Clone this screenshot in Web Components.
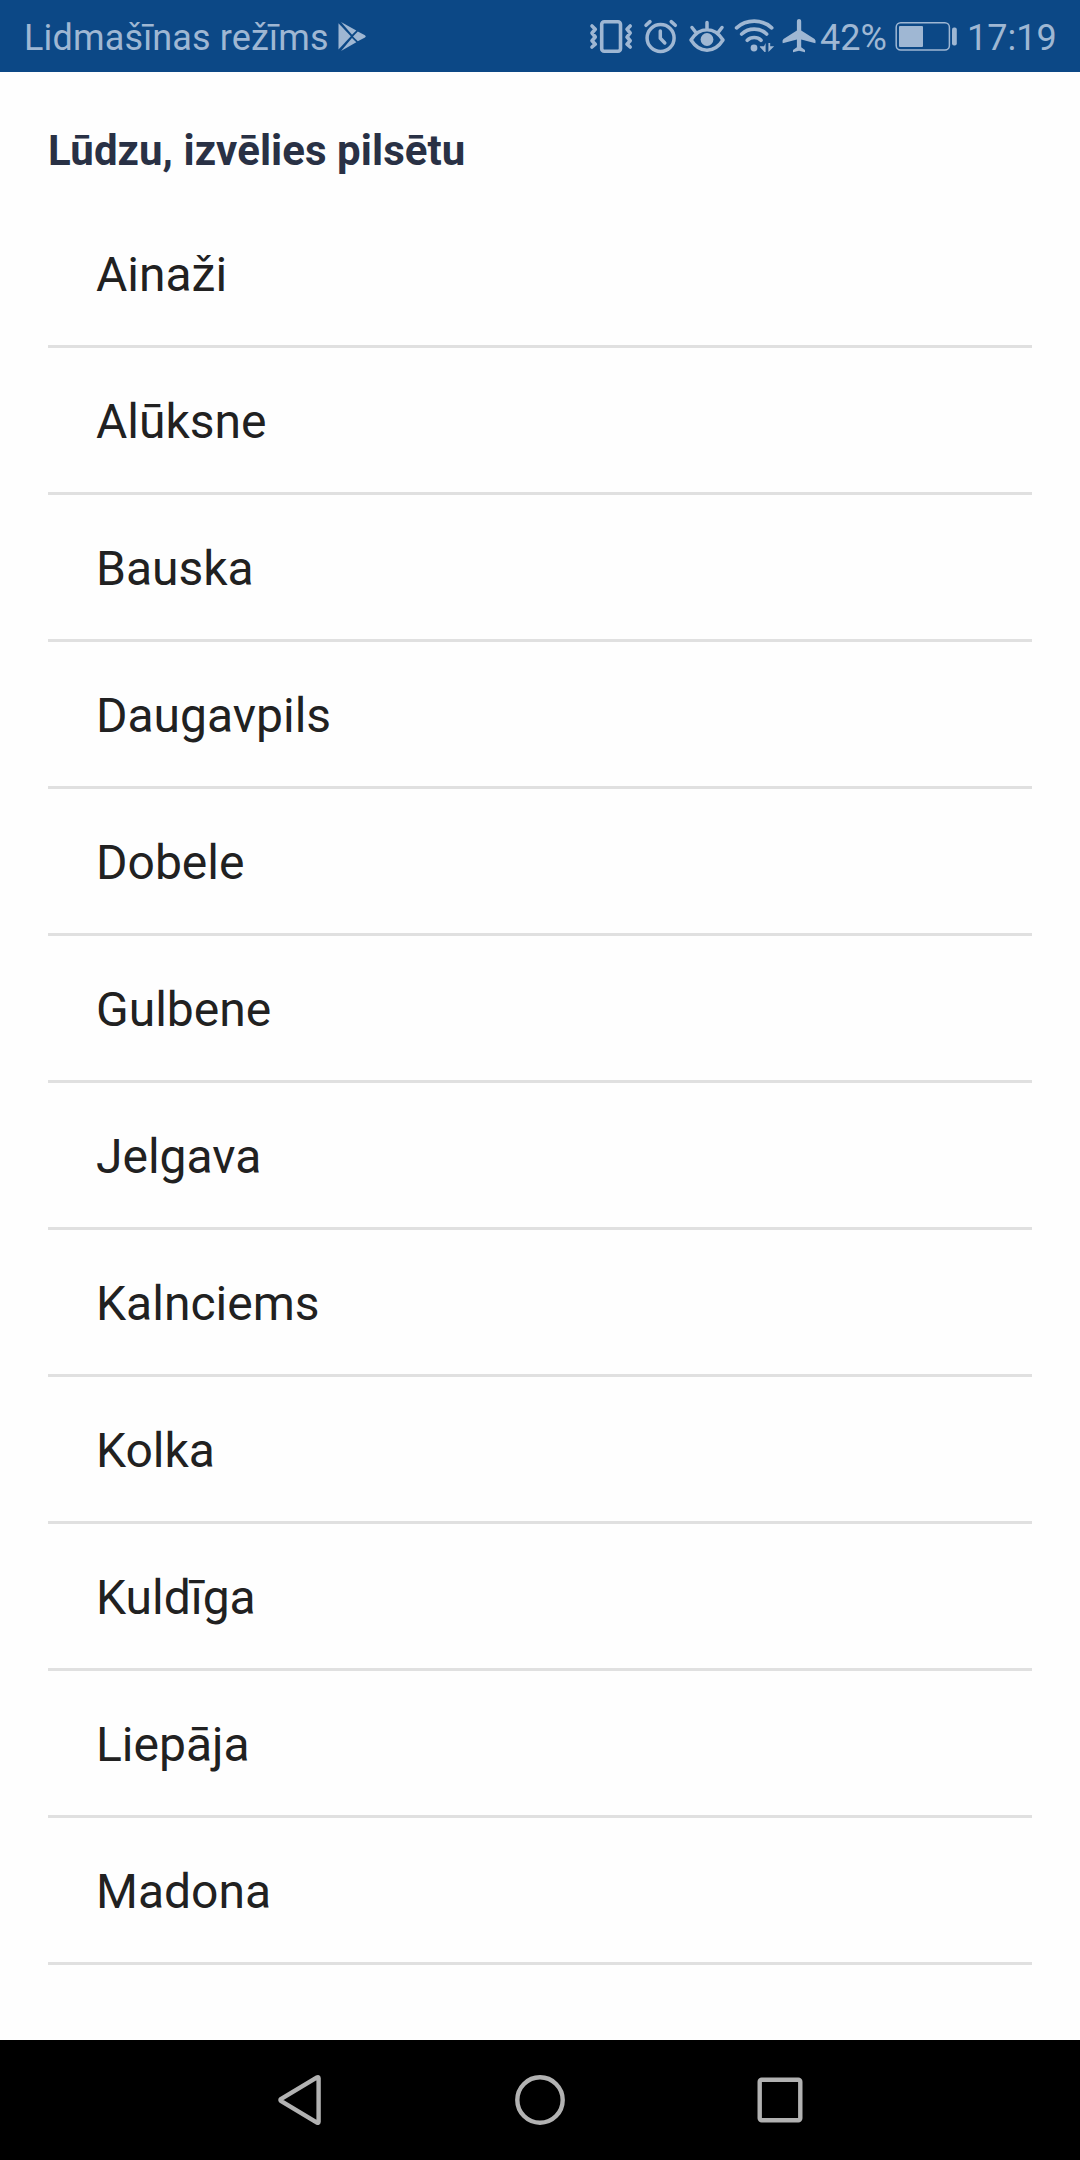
<!DOCTYPE html>
<html lang="lv">
<head>
<meta charset="utf-8">
<title>Pilsētas izvēle</title>
<style>
html, body { margin: 0; padding: 0; }
body { font-family: Roboto, "Noto Sans", sans-serif; background: #fefefe; }
</style>
</head>
<body>
<city-app></city-app>
<script>
class BaseElement extends HTMLElement {
  constructor() {
    super();
    this.attachShadow({ mode: "open" }).innerHTML = this.render();
  }
}

class StatusBar extends BaseElement {
  render() {
    return `
<style>
:host { display: flex; height: 72px; flex: none; background: #0c4886; color: #9fb7d3; font-size: 36px; line-height: 77px; white-space: nowrap; overflow: hidden; padding: 0 24px; box-sizing: border-box; justify-content: space-between; }
.side { display: flex; }
svg { display: block; height: 72px; flex: none; fill: none; stroke: #9fb7d3; stroke-linecap: round; stroke-linejoin: round; }
.solid { fill: #9fb7d3; stroke: none; }
.carrier { width: 310px; letter-spacing: .16px; }
.percent { width: 69px; padding-left: 1px; }
.clock { width: 89px; padding-left: 1px; }
</style>
<div class="side">
  <span class="carrier">Lidmašīnas režīms</span>
  <svg width="36" viewBox="334 0 36 72"><g class="solid">
    <path d="M338.5 23.2 350.8 36.3 338.5 49.5Z"/>
    <path d="M341 22 356.3 30.6 352 34.8Z"/>
    <path d="M341 51 356.3 42.2 352 38Z"/>
    <path d="M357.8 31.6 365 35.3Q366.6 36.4 365 37.6L357.8 41.2 353 36.4Z"/>
  </g></svg>
</div>
<div class="side">
  <svg width="52" viewBox="586 0 52 72" stroke-width="3.6">
    <rect x="601.7" y="21.8" width="18.8" height="29.4" rx="2.5"/>
    <path d="M592 26 595.3 29.2 592 33 595.3 37 592 40.7 595.3 44.2 592 47M630.2 26 627 29.2 630.2 33 627 37 630.2 40.7 627 44.2 630.2 47"/>
  </svg>
  <svg width="46" viewBox="638 0 46 72" stroke-width="3.5">
    <circle cx="660.6" cy="38" r="13.5"/>
    <path d="M660.3 31V38.3L664.8 43M646 25.3 650 21.6M675.3 25.3 671.2 21.6"/>
  </svg>
  <svg width="46" viewBox="684 0 46 72" stroke-width="3.5">
    <path d="M691 40Q697.5 29.7 707 29.7T723 40Q716.5 50.2 707 50.2T691 40ZM707 29V22.5M695.5 32 692 27.5M718.5 32 722 27.5"/>
    <circle class="solid" cx="707" cy="39.5" r="6.4"/>
  </svg>
  <svg width="49" viewBox="730 0 49 72" stroke-width="3.7">
    <path d="M736.6 27.8Q744 21.2 754.2 21.2T771.7 27.8M741.7 34Q747 29.2 754.2 29.2T766.6 34M747.3 40.2Q750 37.5 754.2 37.5T761 40.2"/>
    <circle class="solid" cx="754" cy="48" r="3.4"/>
    <path class="solid" d="M765.6 43V52H764.5L759.9 47V46.3H764ZM768.4 43V52L774.2 46.2H770.2V43Z"/>
  </svg>
  <svg width="40" viewBox="779 0 40 72">
    <path class="solid" d="M796.9 21.5C796.9 18.3 801.2 18.3 801.2 21.5V30.5L814.6 39Q816.2 40.3 815.4 43.3L801.2 39.6V47.3L805 50V52.2L799 50.8 793 52.2V50L796.9 47.3V39.6L782.7 43.3Q781.9 40.3 783.5 39L796.9 30.5Z"/>
  </svg>
  <span class="percent">42%</span>
  <svg width="77" viewBox="889 0 77 72">
    <rect x="896.2" y="22.7" width="53.2" height="27.3" rx="4.5" stroke-width="1.5"/>
    <rect class="solid" x="899" y="26" width="24" height="21" rx="1"/>
    <rect class="solid" x="952" y="27.5" width="4.8" height="18" rx="2"/>
  </svg>
  <span class="clock">17:19</span>
</div>`;
  }
}

class CityItem extends BaseElement {
  render() {
    return `
<style>
:host { display: block; height: 147px; box-sizing: border-box; padding: 3px 48px 0; border-bottom: 3px solid #e0e0e0; font-size: 48px; line-height: 141px; color: #212121; }
</style><slot></slot>`;
  }
}

class CityList extends BaseElement {
  render() {
    return `
<style>
:host { display: flex; flex-direction: column; }
h1 { margin: 0; height: 129px; font-size: 42px; line-height: 158px; font-weight: 700; letter-spacing: .06px; color: #293145; }
</style>
<h1>Lūdzu, izvēlies pilsētu</h1>
<slot></slot>`;
  }
}

class NavBar extends BaseElement {
  render() {
    return `
<style>
:host { display: flex; height: 120px; flex: none; background: #000; justify-content: center; }
svg { display: block; width: 240px; height: 120px; fill: none; stroke: #b2b2b2; stroke-width: 4.4; stroke-linejoin: round; }
</style>
<svg viewBox="180 2040 240 120"><path d="M318.6 2078.2Q318.6 2076.5 317 2077.4L281.2 2098.8Q279.6 2100 281.2 2101.2L317 2122.6Q318.6 2123.5 318.6 2121.8Z"/></svg>
<svg viewBox="420 2040 240 120"><circle cx="540" cy="2100" r="22.7"/></svg>
<svg viewBox="660 2040 240 120"><rect x="759.7" y="2079.7" width="40.6" height="40.6" rx="2"/></svg>`;
  }
}

class CityApp extends BaseElement {
  render() {
    const cities = ["Ainaži", "Alūksne", "Bauska", "Daugavpils", "Dobele", "Gulbene", "Jelgava", "Kalnciems", "Kolka", "Kuldīga", "Liepāja", "Madona"];
    return `
<style>
:host { display: flex; flex-direction: column; width: 1080px; height: 2160px; overflow: hidden; background: #fefefe; }
city-list { flex: 1; padding: 0 48px; }
</style>
<status-bar></status-bar>
<city-list>${cities.map(c => `<city-item>${c}</city-item>`).join("")}</city-list>
<nav-bar></nav-bar>`;
  }
}

customElements.define("status-bar", StatusBar);
customElements.define("city-item", CityItem);
customElements.define("city-list", CityList);
customElements.define("nav-bar", NavBar);
customElements.define("city-app", CityApp);
</script>
</body>
</html>
